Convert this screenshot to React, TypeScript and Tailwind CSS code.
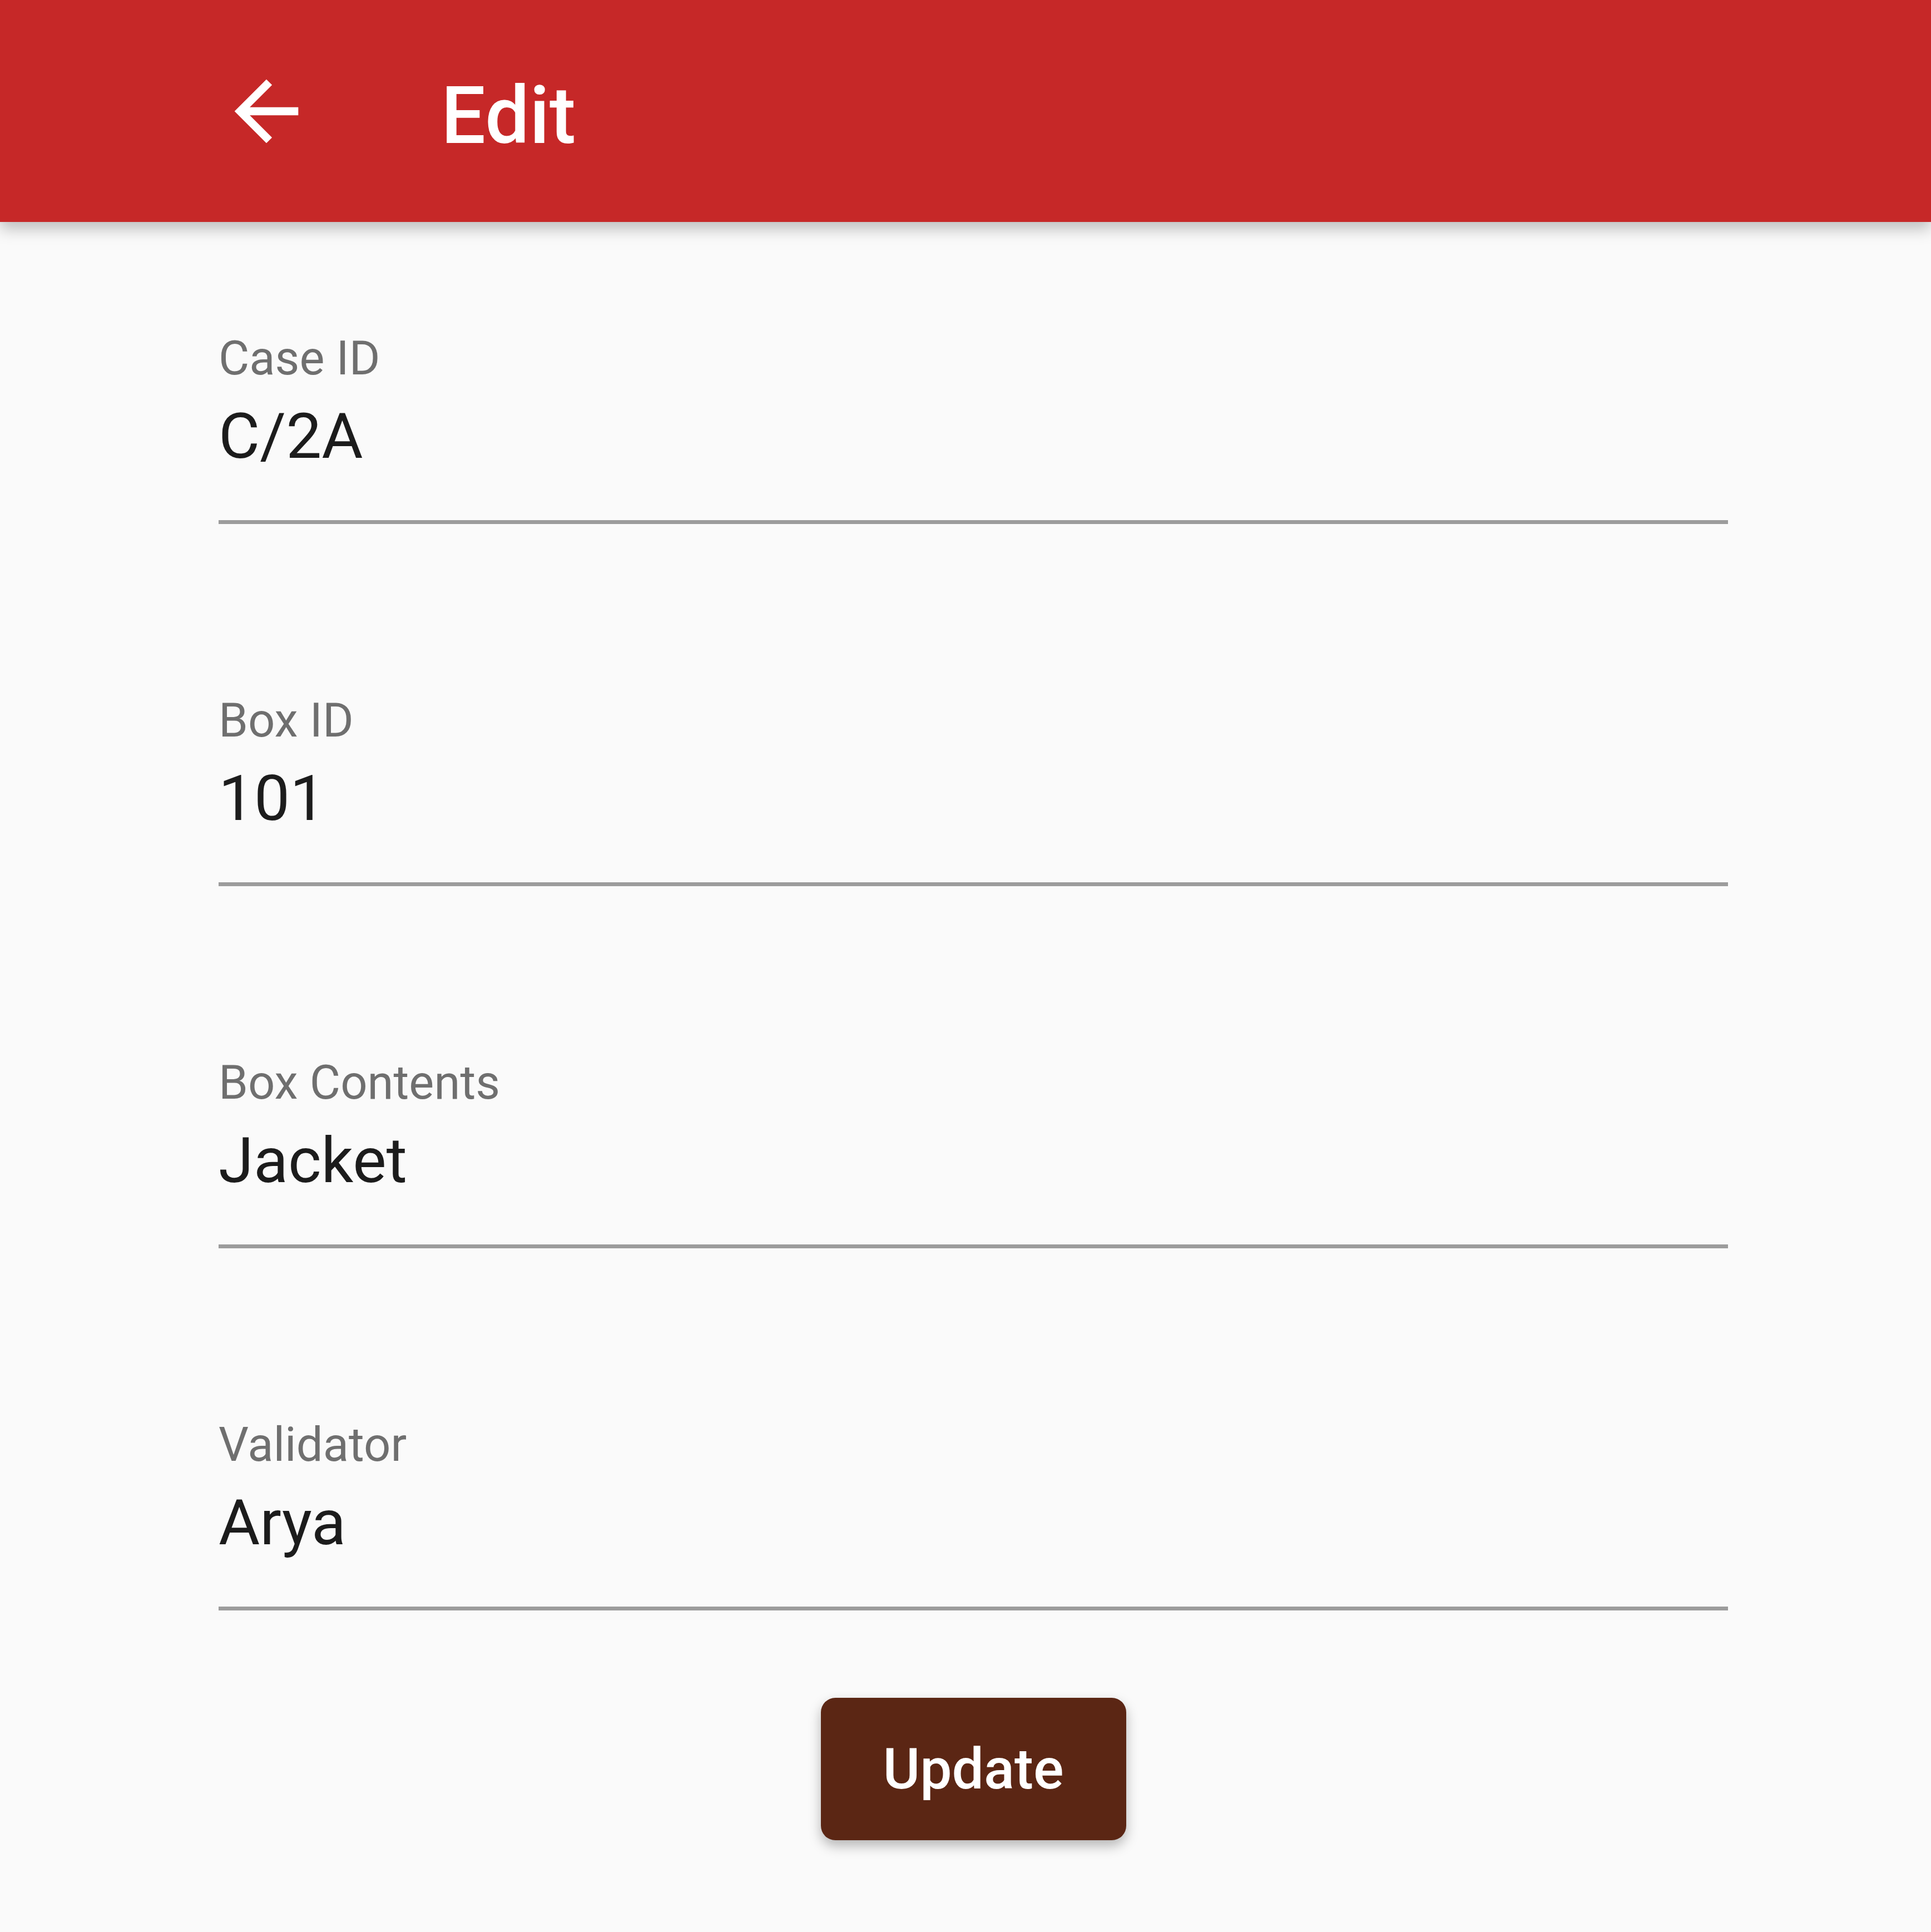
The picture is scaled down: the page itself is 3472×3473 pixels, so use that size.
import { FC } from "react";

const fields = [
  { label: "Case ID", value: "C/2A" },
  { label: "Box ID", value: "101" },
  { label: "Box Contents", value: "Jacket" },
  { label: "Validator", value: "Arya" },
];

const Field: FC<{ label: string; value: string }> = ({ label, value }) => (
  <div className="flex flex-col">
    <div className="h-[100px] text-[85px] leading-[100px] text-[#6f6f6f]">{label}</div>
    <div className="mt-[25px] h-[130px] text-[114px] leading-[130px] text-[#1c1c1c]">{value}</div>
    <div className="mt-[86px] h-[7px] w-full bg-[#9c9c9c]" />
  </div>
);

export default function App() {
  return (
    <div
      className="min-h-[3473px] w-[3472px] bg-[#fafafa]"
      style={{ fontFamily: "Roboto, 'Noto Sans', sans-serif" }}
    >
      <header className="relative z-10 flex h-[399px] items-center bg-[#c62828] pl-[393px] shadow-[0_12px_26px_rgba(0,0,0,0.25)]">
        <svg viewBox="0 0 24 24" className="h-[172px] w-[172px] shrink-0" fill="#ffffff">
          <path d="M20 11H7.83l5.59-5.59L12 4l-8 8 8 8 1.41-1.41L7.83 13H20v-2z" />
        </svg>
        <h1 className="ml-[228px] pt-[18px] text-[142px] font-medium leading-none text-white">Edit</h1>
      </header>

      <main className="ml-[393px] flex w-[2714px] flex-col pt-[195px]">
        <div className="flex flex-col gap-[303px]">
          {fields.map((f) => (
            <Field key={f.label} label={f.label} value={f.value} />
          ))}
        </div>
        <button className="mt-[157px] flex h-[256px] w-[549px] items-center justify-center self-center rounded-[26px] bg-[#5b2614] text-[102px] font-medium text-white shadow-[0_10px_22px_rgba(0,0,0,0.28)]">
          Update
        </button>
      </main>
    </div>
  );
}
